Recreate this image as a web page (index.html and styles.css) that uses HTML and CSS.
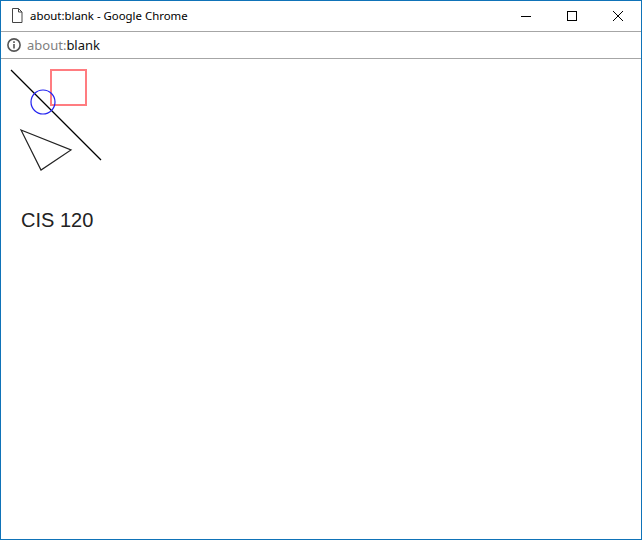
FILE: index.html
```html
<!DOCTYPE html>
<html lang="en">
<head>
<meta charset="utf-8">
<title>about:blank - Google Chrome</title>
<link rel="stylesheet" href="styles.css">
</head>
<body>
<div class="window">
  <header class="titlebar">
    <svg class="page-icon" width="12" height="15" viewBox="0 0 12 15"><path d="M1.500.5h6l3.500 3.500v10.500h-9.500zM7.500.5v3.500h3.500" fill="none" stroke="#444"/></svg>
    <span class="title">about:blank - Google Chrome</span>
    <div class="controls">
      <svg class="control" width="46" height="31" viewBox="0 0 46 31"><path d="M18 15.500h10" stroke="#000"/></svg>
      <svg class="control" width="46" height="31" viewBox="0 0 46 31"><rect x="18.500" y="10.500" width="9" height="9" fill="none" stroke="#000"/></svg>
      <svg class="control" width="46" height="31" viewBox="0 0 46 31"><path d="M18 10l10 10M28 10l-10 10" stroke="#000" fill="none"/></svg>
    </div>
  </header>
  <div class="addressbar">
    <svg class="info-icon" width="14" height="14" viewBox="0 0 14 14"><circle cx="7" cy="7" r="6.100" fill="none" stroke="#555" stroke-width="1.600"/><path d="M7 6v4.500M7 3.300v1.600" stroke="#555" stroke-width="1.600"/></svg>
    <span class="url"><span class="scheme">about:</span>blank</span>
  </div>
  <main class="content">
    <svg class="drawing" width="110" height="120" viewBox="0 0 110 120">
      <line x1="10" y1="11" x2="100" y2="101" stroke="#000" stroke-width="1.300"/>
      <rect x="50" y="11" width="35" height="35" fill="none" stroke="#ff7c80" stroke-width="2"/>
      <circle cx="42" cy="43" r="12" fill="none" stroke="#2222f0" stroke-width="1.200"/>
      <polygon points="20,71 70,91 40,111" fill="none" stroke="#222" stroke-width="1.200"/>
    </svg>
    <p class="caption">CIS 120</p>
  </main>
</div>
</body>
</html>
```
FILE: styles.css
```css
* { box-sizing: border-box; }
html, body { margin: 0; background: #fff; }
.window {
  width: 642px;
  height: 540px;
  border: 1px solid #0f73b8;
  display: flex;
  flex-direction: column;
  color: #000;
}
.titlebar {
  height: 31px;
  flex: none;
  display: flex;
  align-items: center;
  border-bottom: 1px solid #a6a6a6;
  padding-left: 10px;
}
.page-icon { flex: none; margin-bottom: 1px; }
.title { margin: 0 0 1px 7px; font: 11.400px/16px "Noto Sans", "Liberation Sans", sans-serif; }
.controls { margin-left: auto; display: flex; }
.control { display: block; }
.addressbar {
  height: 27px;
  flex: none;
  display: flex;
  align-items: center;
  border-bottom: 1px solid #a6a6a6;
  padding-left: 6px;
}
.url { margin-left: 6px; font: 13px "Noto Sans", "Liberation Sans", sans-serif; color: #111; }
.scheme { color: #808080; }
.content { flex: 1; }
.drawing { display: block; }
.caption {
  margin: 29px 0 0 20px;
  font: 20px/24px "Liberation Sans", Arial, sans-serif;
  color: #222;
}
```
